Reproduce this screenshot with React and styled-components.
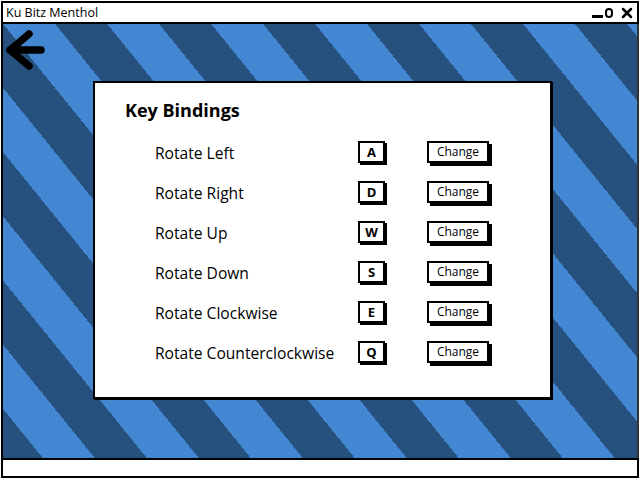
import React from 'react'
import styled, { createGlobalStyle } from 'styled-components'

const Global = createGlobalStyle`
    html, body {
        margin: 0;
        padding: 0;
        background: #fff;
    }
    * {
        box-sizing: border-box;
    }
`

const Window = styled.div`
    width: 640px;
    height: 480px;
    padding: 1px 1px 2px 1px;
    display: flex;
    flex-direction: column;
    background: #fff;
    font-family: "Open Sans", "Liberation Sans", sans-serif;
    color: #000;
`

const TitleBar = styled.div`
    height: 23px;
    border: 2px solid #000;
    background: #fff;
    display: flex;
    align-items: center;
    justify-content: space-between;
    padding: 0 4px 0 3px;
`

const Title = styled.span`
    font-size: 12.5px;
    line-height: 19px;
`

const Content = styled.div`
    flex: 1;
    border-left: 2px solid #000;
    border-right: 2px solid #333;
    padding: 2px 0 0 0;
    background: repeating-linear-gradient(
        51deg,
        #26507e 0px,
        #26507e 30.9px,
        #4386d2 30.9px,
        #4386d2 71.3px,
        #26507e 71.3px,
        #26507e 80.8px
    );
`

const BackIcon = styled.svg`
    display: block;
    width: 47px;
    height: 47px;
`

const Panel = styled.div`
    width: 459px;
    height: 318px;
    margin: 8px 0 0 90px;
    background: #fff;
    border: 2px solid #000;
    box-shadow: 1px 1px 0 #000;
    padding: 15px 0 0 30px;
`

const Heading = styled.h2`
    margin: 0 0 11px;
    font-size: 18px;
    line-height: 24px;
    font-weight: 700;
`

const List = styled.div`
    padding-left: 30px;
`

const Row = styled.div`
    height: 40px;
    display: grid;
    grid-template-columns: 203px 69px auto;
    align-items: center;
`

const Label = styled.span`
    font-size: 15.6px;
`

const Box = styled.div`
    height: 22px;
    width: ${p => p.w}px;
    margin-bottom: 2px;
    border: 2px solid #000;
    box-shadow: ${p => p.s}px ${p => p.s}px 0 #000;
    background: #fff;
    display: flex;
    align-items: center;
    justify-content: center;
    font-size: ${p => p.fs}px;
    font-weight: ${p => p.fw};
    line-height: 18px;
`

const StatusBar = styled.div`
    height: 20px;
    border: 2px solid #000;
    background: #fff;
`

const bindings = [
    ['Rotate Left', 'A'],
    ['Rotate Right', 'D'],
    ['Rotate Up', 'W'],
    ['Rotate Down', 'S'],
    ['Rotate Clockwise', 'E'],
    ['Rotate Counterclockwise', 'Q'],
]

const WindowControls = () => (
    <svg width="41" height="12" viewBox="0 0 41 12">
        <rect x="0" y="8" width="11" height="3" fill="#000" />
        <rect x="14" y="2" width="6" height="8" rx="3" fill="none" stroke="#000" strokeWidth="2" />
        <path d="M31 2 L39 10 M39 2 L31 10" stroke="#000" strokeWidth="2.5" strokeLinecap="round" />
    </svg>
)

const App = () => {
    return (
        <>
            <Global />
            <Window>
                <TitleBar>
                    <Title>Ku Bitz Menthol</Title>
                    <WindowControls />
                </TitleBar>
                <Content>
                    <BackIcon viewBox="0 0 47 47">
                        <path
                            d="M38 24 H7 M26 8 L7 24 L26 40"
                            fill="none"
                            stroke="#000"
                            strokeWidth="7.5"
                            strokeLinecap="round"
                            strokeLinejoin="round"
                        />
                    </BackIcon>
                    <Panel>
                        <Heading>Key Bindings</Heading>
                        <List>
                            {bindings.map(([label, key]) => (
                                <Row key={label}>
                                    <Label>{label}</Label>
                                    <Box w={27} s={2} fs={13} fw={700}>{key}</Box>
                                    <Box w={62} s={3} fs={12} fw={400}>Change</Box>
                                </Row>
                            ))}
                        </List>
                    </Panel>
                </Content>
                <StatusBar />
            </Window>
        </>
    )
}

export default App
